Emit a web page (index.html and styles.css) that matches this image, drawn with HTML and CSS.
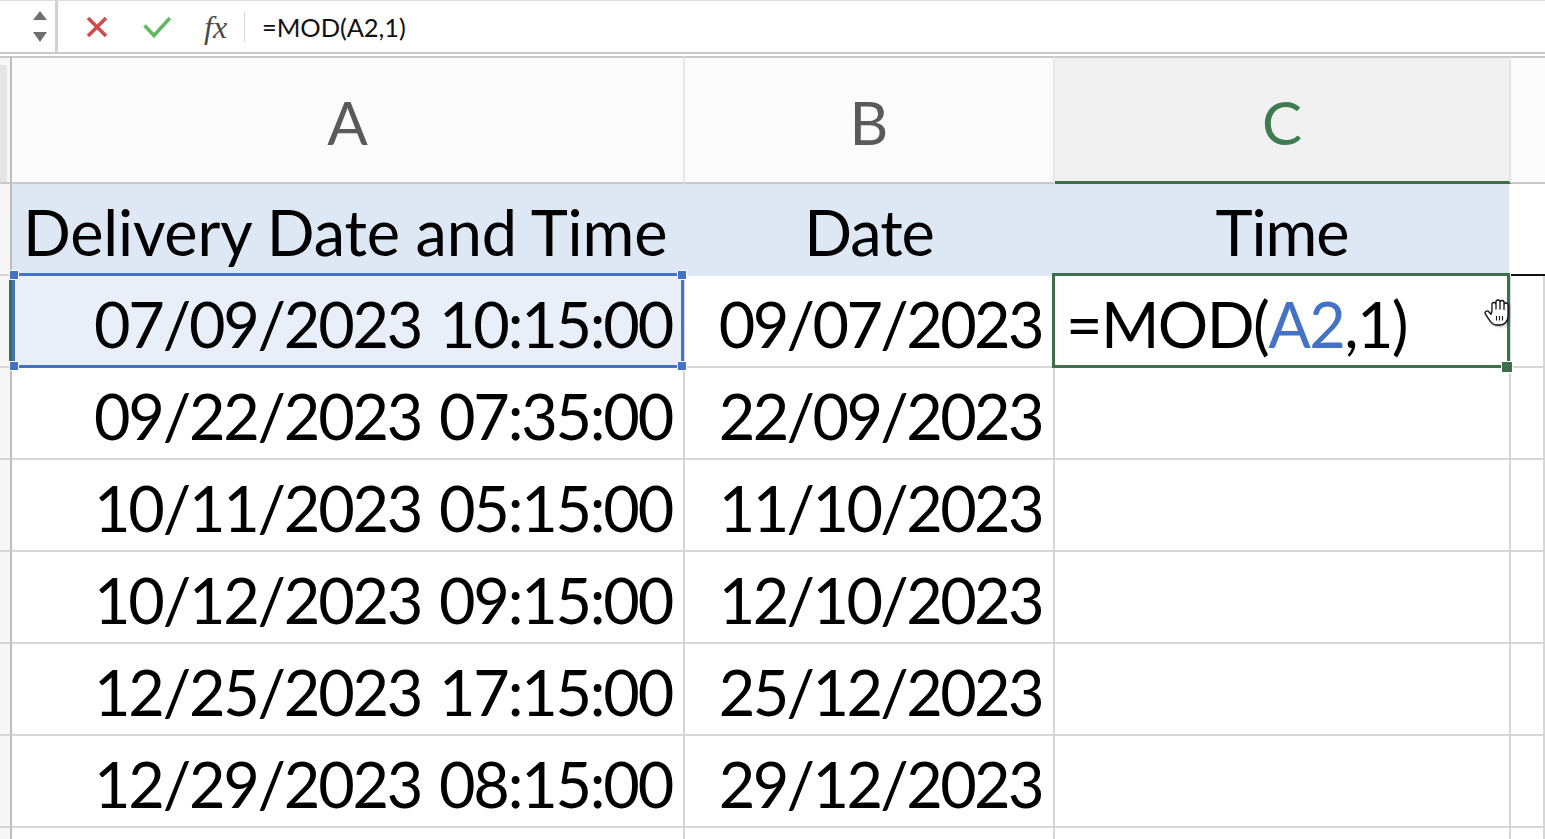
FILE: index.html
```html
<!DOCTYPE html>
<html>
<head>
<meta charset="utf-8">
<link rel="stylesheet" href="styles.css">
</head>
<body>
<div class="fbar">
  <div class="namebox"><span class="arr up"></span><span class="arr down"></span></div>
  <svg class="ic-x" width="22" height="22" viewBox="0 0 22 22"><path d="M2 2L20 20M20 2L2 20" stroke="#d24b4b" stroke-width="3.6" fill="none"/></svg>
  <svg class="ic-ok" width="28" height="22" viewBox="0 0 28 22"><path d="M1.5 9.5L11 19.5L27 2" stroke="#62b862" stroke-width="3.6" fill="none"/></svg>
  <span class="fx">fx</span>
  <span class="fsep"></span>
  <span class="ftext">=MOD(A2,1)</span>
</div>
<div class="sheet">
  <div class="corner"></div>
  <div class="hd">A</div>
  <div class="hd">B</div>
  <div class="hd hd-act">C</div>
  <div class="hd hd-d"></div>

  <div class="rh"></div>
  <div class="c fill title">Delivery Date and Time</div>
  <div class="c fill ctr">Date</div>
  <div class="c fill ctr fill-c">Time</div>
  <div class="c d1"></div>

  <div class="rh rh-act"></div>
  <div class="c r sel-a">07/09/2023 10:15:00<span class="selbox"></span><span class="h h-tl"></span><span class="h h-tr"></span><span class="h h-bl"></span><span class="h h-br"></span></div>
  <div class="c r dt">09/07/2023</div>
  <div class="c act">=MOD(<span class="ref">A2</span>,1)<span class="actbox"></span><span class="fh"></span>
    <svg class="hand" width="34" height="32" viewBox="0 0 34 32"><path d="M9 15V8.5a2 2 0 0 1 4 0V13V6a2 2 0 0 1 4 0V13V6.5a2 2 0 0 1 4 0V13.5V9a2 2 0 0 1 4 0V20c0 5.5-3.5 9-8.5 9h-3c-3 0-5-1.8-7-4.8l-4-6a2 2 0 0 1 3.2-2.4l2.3 2.6z" fill="#fff" stroke="#111" stroke-width="1.3" stroke-linejoin="round"/><path d="M13.5 20v4.5M16.5 20v4.5M19.5 20v4.5" stroke="#111" stroke-width="1.1"/></svg>
  </div>
  <div class="c"></div>

  <div class="rh"></div>
  <div class="c r">09/22/2023 07:35:00</div>
  <div class="c r dt">22/09/2023</div>
  <div class="c"></div>
  <div class="c"></div>

  <div class="rh"></div>
  <div class="c r">10/11/2023 05:15:00</div>
  <div class="c r dt">11/10/2023</div>
  <div class="c"></div>
  <div class="c"></div>

  <div class="rh"></div>
  <div class="c r">10/12/2023 09:15:00</div>
  <div class="c r dt">12/10/2023</div>
  <div class="c"></div>
  <div class="c"></div>

  <div class="rh"></div>
  <div class="c r">12/25/2023 17:15:00</div>
  <div class="c r dt">25/12/2023</div>
  <div class="c"></div>
  <div class="c"></div>

  <div class="rh"></div>
  <div class="c r">12/29/2023 08:15:00</div>
  <div class="c r dt">29/12/2023</div>
  <div class="c"></div>
  <div class="c"></div>

  <div class="rh last"></div>
  <div class="c last"></div>
  <div class="c last"></div>
  <div class="c last"></div>
  <div class="c last"></div>
</div>
</body>
</html>
```
FILE: styles.css
```css
* { box-sizing: border-box; }
html, body { margin: 0; padding: 0; background: #fff; overflow: hidden; }
body { width: 1545px; height: 839px; font-family: Lato, "Open Sans", sans-serif; color: #000; }

.fbar {
  display: flex;
  align-items: center;
  height: 54px;
  border-top: 1px solid #dcdcdc;
  border-bottom: 2px solid #c9c9c9;
}
.namebox {
  width: 58px;
  height: 100%;
  border-right: 3px solid #d2d2d2;
  display: flex;
  flex-direction: column;
  align-items: flex-end;
  justify-content: center;
  gap: 12px;
  padding-right: 8px;
}
.arr { width: 0; height: 0; border-left: 7px solid transparent; border-right: 7px solid transparent; }
.arr.up { border-bottom: 9px solid #6e6e6e; }
.arr.down { border-top: 10px solid #6e6e6e; }
.ic-x { margin-left: 28px; }
.ic-ok { margin-left: 35px; }
.fx {
  margin-left: 33px;
  font-family: "Liberation Serif", serif;
  font-style: italic;
  font-size: 32px;
  color: #4a4a4a;
  line-height: 1;
}
.fsep { width: 1px; height: 30px; background: #d8d8d8; margin-left: 17px; }
.ftext { margin-left: 17px; font-size: 25.5px; color: #111; letter-spacing: -0.1px; }

.sheet {
  display: grid;
  grid-template-columns: 12px 673px 370px 456px 34px;
  grid-template-rows: 128px repeat(7, 92px) 11px;
  margin-top: 2px;
}
.corner {
  background: #f7f7f7;
  border-top: 2px solid #c9c9c9;
  border-bottom: 2px solid #c9c9c9;
  border-right: 2px solid #bdbdbd;
  padding: 7px 3px 0 0;
}
.corner::before { content: ""; display: block; height: 100%; background: #e4e4e4; }
.hd {
  background: #fbfbfb;
  border-top: 2px solid #c9c9c9;
  border-bottom: 2px solid #c9c9c9;
  border-right: 2px solid #e6e6e6;
  display: flex;
  align-items: center;
  justify-content: center;
  font-size: 60px;
  color: #5a5a5a;
  padding-top: 4px;
}
.hd-act { background: #f1f1f1; color: #3f7b51; border-bottom: 3px solid #3e6f4c; }
.hd-d { border-right: none; }

.rh {
  background: #f6f6f6;
  border-right: 2px solid #bdbdbd;
  border-bottom: 2px solid #d6d6d6;
}
.rh-act { border-right: 3px solid #3e6f4c; }

.c {
  border-right: 2px solid #d6d6d6;
  border-bottom: 2px solid #d6d6d6;
  display: flex;
  align-items: flex-end;
  font-size: 63px;
  line-height: 72px;
  letter-spacing: -2px;
  padding: 0 11px 6px;
  white-space: pre;
}
.last { border-bottom: none; }
.r { justify-content: flex-end; letter-spacing: -2.22px; word-spacing: 4px; }
.dt { letter-spacing: -2.6px; }
.ctr { justify-content: center; letter-spacing: -1px; }
.title { letter-spacing: -0.2px; }
.fill { background: #dde8f4; border-color: #dde8f4; }
.fill-c { border-right-color: #fff; }
.d1 { border-bottom-color: #111; border-right: none; }

.sel-a { background: #e9eff8; position: relative; }
.selbox {
  position: absolute;
  left: 0; top: -3px; right: -1px; bottom: -2px;
  border: 3px solid #4472c4;
}
.h {
  position: absolute;
  width: 8px; height: 8px;
  background: #4472c4;
  outline: 1px solid #fff;
}
.h-tl { left: -2px; top: -5px; }
.h-tr { right: -3px; top: -5px; }
.h-bl { left: -2px; bottom: -4px; }
.h-br { right: -3px; bottom: -4px; }

.act { position: relative; letter-spacing: -1.6px; }
.ref { color: #4472c4; }
.actbox {
  position: absolute;
  left: -3px; top: -3px; right: -1px; bottom: -2px;
  border: 3px solid #3e6f4c;
}
.fh {
  position: absolute;
  right: -3px; bottom: -6px;
  width: 10px; height: 10px;
  background: #3e6f4c;
  outline: 1px solid #fff;
}
.hand {
  position: absolute;
  left: 428px; top: 20px;
  filter: drop-shadow(1px 1px 1px rgba(0,0,0,0.35));
}
```
